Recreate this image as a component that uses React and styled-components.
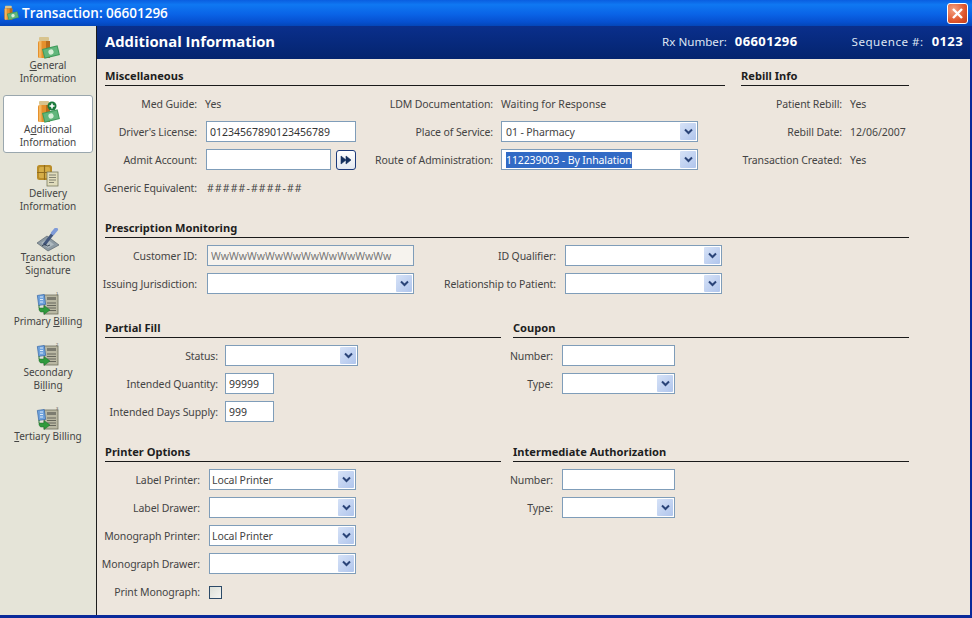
import React from 'react';
import styled, { createGlobalStyle } from 'styled-components';

const Global = createGlobalStyle`
  html, body { margin: 0; padding: 0; width: 972px; height: 618px; overflow: hidden; background: #ede6dd; }
  * { box-sizing: border-box; }
`;
const FONT = `"Noto Sans", "Liberation Sans", Arial, sans-serif`;

const Window = styled.div`
  width: 972px; height: 618px; display: flex; flex-direction: column;
  font-family: ${FONT}; font-size: 10.5px; color: #444; letter-spacing: -0.1px;
  border-bottom: 3px solid #0a2a9a; border-right: 2px solid #0a2a9a;
`;
const TitleBar = styled.div`
  height: 26px; flex: none; margin-right: -2px; display: flex; align-items: center; padding: 0 4px 0 3px;
  background: linear-gradient(180deg, #0a5ee0 0%, #0f78f2 18%, #0a63e6 55%, #0650d0 85%, #0446b8 100%);
`;
const TitleText = styled.div`
  margin-left: 3px; color: #fff; font-family: "Open Sans", ${FONT}; font-size: 13.5px; font-weight: 600; flex: 1; letter-spacing: 0;
`;
const CloseButton = styled.div`
  width: 21px; height: 21px; border: 1px solid #fff; border-radius: 3px; display: flex; align-items: center; justify-content: center;
  background: radial-gradient(circle at 30% 30%, #f4a283, #e0562c 60%, #c33c18);
`;
const Body = styled.div` flex: 1; display: flex; min-height: 0; `;
const Sidebar = styled.nav`
  width: 97px; flex: none; background: #e5e4d8; border-right: 1px solid #1c1c1c; padding: 5px 3px; display: flex; flex-direction: column; gap: 6px;
`;
const NavItem = styled.div`
  width: 90px; padding: 4px 0 3px; display: flex; flex-direction: column; align-items: center; text-align: center;
  line-height: 13px; color: #444; font-size: 10px; letter-spacing: 0;
  border: 1px solid ${p => (p.$active ? '#9aa7ae' : 'transparent')}; border-radius: 3px;
  background: ${p => (p.$active ? '#fff' : 'transparent')};
  svg { display: block; margin-bottom: -1px; }
`;
const U = styled.span` text-decoration: underline; `;
const Main = styled.main` flex: 1; display: flex; flex-direction: column; min-width: 0; background: #ede6dd; `;
const Header = styled.header`
  height: 33px; flex: none; display: flex; align-items: center; padding: 0 7px 3px 8px; color: #dfe6f3; letter-spacing: 0;
  background: linear-gradient(180deg, #0a2f8c, #04246e);
`;
const HeaderTitle = styled.h1`
  margin: 0; flex: 1; font-family: "Open Sans", ${FONT}; font-size: 14.8px; font-weight: 700; color: #fff;
`;
const HeaderLabel = styled.span` font-size: 11.6px; margin-left: ${p => p.$gap || 0}px; letter-spacing: ${p => p.$ls || 0}px; `;
const HeaderValue = styled.b` margin-left: 8px; font-size: 13px; color: #fff; font-weight: 700; letter-spacing: 0.4px; `;
const Content = styled.div` padding: 9px 0 0 8px; width: 812px; `;
const Split = styled.div`
  display: grid; grid-template-columns: ${p => p.$cols}; column-gap: ${p => p.$gap}px; margin-top: ${p => p.$top || 0}px;
`;
const Section = styled.section` margin-top: ${p => p.$top || 0}px; min-width: 0; `;
const Heading = styled.h2`
  margin: 0 0 4px; height: 18px; line-height: 16px; font-size: 11.1px; font-weight: 700; color: #1e1e1e; letter-spacing: 0;
  border-bottom: 1px solid #1a1a1a;
`;
const Columns = styled.div` display: flex; `;
const Column = styled.div` width: ${p => (p.$w ? `${p.$w}px` : 'auto')}; flex: none; `;
const Row = styled.div` height: 28px; display: flex; align-items: center; gap: ${p => p.$gap || 8}px; `;
const Label = styled.label` width: ${p => p.$w}px; flex: none; display: flex; justify-content: flex-end; white-space: nowrap; `;
const Value = styled.span` white-space: nowrap; margin-left: ${p => p.$shift || 0}px; letter-spacing: ${p => p.$ls || 0}px; `;
const TextBox = styled.input`
  width: ${p => p.$w}px; height: 21px; border: 1px solid #7f9db9; padding: 0 3px; font: inherit; outline: none; color: ${p => (p.$muted ? '#777' : '#333')};
  background: ${p => (p.$muted ? '#f6f3ee' : '#fff')}; margin: 0 0 1px; letter-spacing: 0;
`;
const Select = styled.div`
  width: ${p => p.$w}px; height: 21px; margin-bottom: 1px; border: 1px solid #7f9db9; background: #fff; display: flex; align-items: center; padding-left: ${p => p.$pad}px; padding-right: 1px;
`;
const SelectText = styled.span` flex: 1; white-space: nowrap; `;
const Highlight = styled.span` background: #316ac5; color: #fff; padding: 1px 0; `;
const ArrowButton = styled.span`
  width: 16px; height: 17px; flex: none; display: flex; align-items: center; justify-content: center; border-radius: 1px;
  background: linear-gradient(135deg, #d6e2f7, #b0c5ec);
`;
const GoButton = styled.button`
  width: 20px; height: 20px; margin: 0 0 1px -4px; padding: 0; border: 1px solid #1c3a7a; border-radius: 3px; background: linear-gradient(180deg, #fff, #e4e8f0);
  display: flex; align-items: center; justify-content: center;
`;
const Checkbox = styled.span`
  width: 13px; height: 13px; border: 1px solid #2c4a68; background: linear-gradient(135deg, #dcdfd8, #f4f4f0); display: block;
`;

const Chevron = () => (
  <svg width="9" height="7" viewBox="0 0 9 7"><path d="M1 1.5 L4.5 5 L8 1.5" fill="none" stroke="#2a4478" strokeWidth="2" /></svg>
);
const Dropdown = ({ w, value, selected, pad = 4 }) => (
  <Select $w={w} $pad={pad}>
    <SelectText>{selected ? <Highlight>{value}</Highlight> : value}</SelectText>
    <ArrowButton><Chevron /></ArrowButton>
  </Select>
);

const Bottle = ({ plus }) => (
  <>
    <rect x="3" y="1" width="10" height="4" rx="1" fill="#d8c48e" />
    <rect x="2" y="5" width="12" height="17" rx="1.5" fill="#e5902c" />
    <rect x="3" y="5" width="2.5" height="17" fill="#f4b65e" />
    <rect x="10" y="5" width="4" height="17" fill="#b86c1c" />
    <g transform="rotate(-14 15 16)">
      <rect x="7" y="11" width="16" height="10" fill="#3f9a5a" />
      <rect x="8" y="12" width="14" height="8" fill="#62b67c" />
      <circle cx="15" cy="16" r="2.6" fill="#d8efd8" />
    </g>
    {plus && (
      <g>
        <circle cx="16" cy="6" r="4.5" fill="#1a7a3c" />
        <path d="M16 3.5v5M13.5 6h5" stroke="#fff" strokeWidth="1.6" />
      </g>
    )}
  </>
);
const Delivery = () => (
  <>
    <rect x="1" y="1" width="15" height="15" rx="2.5" fill="#b98c28" />
    <rect x="3" y="3" width="11" height="11" rx="1.5" fill="#d6ae48" />
    <path d="M1 8.5h15M8.5 1v15" stroke="#8f6c1e" strokeWidth="1.2" />
    <rect x="11" y="8" width="11" height="14" fill="#e0dcbc" stroke="#7c7c60" strokeWidth="0.8" />
    <path d="M13 11h7M13 13.5h7M13 16h7M13 18.5h5" stroke="#77776a" strokeWidth="0.9" />
  </>
);
const Signature = () => (
  <>
    <path d="M1 15 L11 8 L23 17 L12 23 Z" fill="#8d9aa3" stroke="#5a6670" strokeWidth="0.7" />
    <path d="M5 15 L11 11 L18 16.5 L12 20 Z" fill="#aeb9bf" />
    <path d="M8 17 L18 4" stroke="#42567c" strokeWidth="3" />
    <path d="M17 5 L20 1.5" stroke="#7f9bd8" strokeWidth="4" strokeLinecap="round" />
    <path d="M6 18 q3 -3 4 -1 t4 0" stroke="#2c3a4c" fill="none" strokeWidth="0.9" />
  </>
);
const Billing = ({ mark }) => (
  <>
    <rect x="8" y="3" width="14" height="19" fill="#b9b7a2" stroke="#6e6e5e" strokeWidth="0.8" />
    <rect x="11" y="5" width="9" height="3" fill="#7c7c70" />
    <path d="M11 11h9M11 13.5h9M11 16h9M11 18.5h9" stroke="#67675c" strokeWidth="1" />
    <rect x="2" y="3" width="7" height="10" fill="#6fa2dc" stroke="#3a6aa8" strokeWidth="0.7" transform="rotate(-8 5 8)" />
    <path d="M4 5h3M4 7.5h3M4 10h3" stroke="#e6f0fb" strokeWidth="0.9" />
    <path d="M3 13v3h5v-2.5l6 4.5-6 4.5V20H4.5 L3 18Z" fill="#2f9a3c" stroke="#1a6a28" strokeWidth="0.5" />
    <text x="20" y="3" fontSize="4" fill="#555" fontFamily="Liberation Sans, sans-serif">{mark}</text>
  </>
);
const Icon = ({ size = 24, children }) => <svg width={size} height={size} viewBox="0 0 24 24">{children}</svg>;

const FormRow = ({ label, w, gap, children }) => (
  <Row $gap={gap}><Label $w={w}>{label}</Label>{children}</Row>
);

export default function App() {
  return (
    <>
      <Global />
      <Window>
        <TitleBar>
          <Icon size={16}><Bottle /></Icon>
          <TitleText>Transaction: 06601296</TitleText>
          <CloseButton>
            <svg width="13" height="13" viewBox="0 0 13 13"><path d="M2 2 L11 11 M11 2 L2 11" stroke="#fff" strokeWidth="2.4" /></svg>
          </CloseButton>
        </TitleBar>
        <Body>
          <Sidebar>
            <NavItem><Icon><Bottle /></Icon><span><U>G</U>eneral<br />Information</span></NavItem>
            <NavItem $active><Icon><Bottle plus /></Icon><span>A<U>d</U>ditional<br />Information</span></NavItem>
            <NavItem><Icon><Delivery /></Icon><span>Delivery<br />Information</span></NavItem>
            <NavItem><Icon><Signature /></Icon><span>T<U>r</U>ansaction<br />Signature</span></NavItem>
            <NavItem><Icon><Billing mark="1" /></Icon><span>Primary <U>B</U>illing</span></NavItem>
            <NavItem><Icon><Billing mark="2" /></Icon><span>Secondary<br />Bi<U>l</U>ling</span></NavItem>
            <NavItem><Icon><Billing mark="3" /></Icon><span><U>T</U>ertiary Billing</span></NavItem>
          </Sidebar>
          <Main>
            <Header>
              <HeaderTitle>Additional Information</HeaderTitle>
              <HeaderLabel>Rx Number:</HeaderLabel><HeaderValue>06601296</HeaderValue>
              <HeaderLabel $gap={54} $ls={0.5}>Sequence #:</HeaderLabel><HeaderValue>0123</HeaderValue>
            </Header>
            <Content>
              <Split $cols="620px 168px" $gap={16}>
                <Section>
                  <Heading>Miscellaneous</Heading>
                  <Columns>
                    <Column $w={270}>
                      <FormRow label="Med Guide:" w={92}><Value>Yes</Value></FormRow>
                      <FormRow label="Driver's License:" w={92} gap={9}><TextBox $w={150} readOnly defaultValue="01234567890123456789" /></FormRow>
                      <FormRow label="Admit Account:" w={92} gap={9}><TextBox $w={125} readOnly /><GoButton aria-label="Go">
                        <svg width="12" height="10" viewBox="0 0 12 10"><path d="M1 1l5 4-5 4zM6 1l5 4-5 4z" fill="#14305e" stroke="#14305e" strokeWidth="0.6" /></svg>
                      </GoButton></FormRow>
                      <FormRow label="Generic Equivalent:" w={92}><Value $shift={2} $ls={1.1}>#####-####-##</Value></FormRow>
                    </Column>
                    <Column>
                      <FormRow label="LDM Documentation:" w={118}><Value>Waiting for Response</Value></FormRow>
                      <FormRow label="Place of Service:" w={118}><Dropdown w={197} value="01 - Pharmacy" /></FormRow>
                      <FormRow label="Route of Administration:" w={118}><Dropdown w={197} value="112239003 - By Inhalation" selected /></FormRow>
                    </Column>
                  </Columns>
                </Section>
                <Section>
                  <Heading>Rebill Info</Heading>
                  <FormRow label="Patient Rebill:" w={101}><Value>Yes</Value></FormRow>
                  <FormRow label="Rebill Date:" w={101}><Value>12/06/2007</Value></FormRow>
                  <FormRow label="Transaction Created:" w={101}><Value>Yes</Value></FormRow>
                </Section>
              </Split>

              <Section $top={18}>
                <Heading>Prescription Monitoring</Heading>
                <Columns>
                  <Column $w={339}>
                    <FormRow label="Customer ID:" w={92} gap={10}><TextBox $w={207} $muted readOnly defaultValue="WwWwWwWwWwWwWwWwWwWw" /></FormRow>
                    <FormRow label="Issuing Jurisdiction:" w={92} gap={10}><Dropdown w={207} /></FormRow>
                  </Column>
                  <Column>
                    <FormRow label="ID Qualifier:" w={112} gap={9}><Dropdown w={157} /></FormRow>
                    <FormRow label="Relationship to Patient:" w={112} gap={9}><Dropdown w={157} /></FormRow>
                  </Column>
                </Columns>
              </Section>

              <Split $cols="396px 396px" $gap={12} $top={22}>
                <Section>
                  <Heading>Partial Fill</Heading>
                  <FormRow label="Status:" w={113} gap={7}><Dropdown w={133} /></FormRow>
                  <FormRow label="Intended Quantity:" w={113} gap={7}><TextBox $w={49} readOnly defaultValue="99999" /></FormRow>
                  <FormRow label="Intended Days Supply:" w={113} gap={7}><TextBox $w={49} readOnly defaultValue="999" /></FormRow>
                </Section>
                <Section>
                  <Heading>Coupon</Heading>
                  <FormRow label="Number:" w={40} gap={9}><TextBox $w={113} readOnly /></FormRow>
                  <FormRow label="Type:" w={40} gap={9}><Dropdown w={113} /></FormRow>
                </Section>
              </Split>

              <Split $cols="396px 396px" $gap={12} $top={18}>
                <Section>
                  <Heading>Printer Options</Heading>
                  <FormRow label="Label Printer:" w={95} gap={9}><Dropdown w={147} pad={2} value="Local Printer" /></FormRow>
                  <FormRow label="Label Drawer:" w={95} gap={9}><Dropdown w={147} /></FormRow>
                  <FormRow label="Monograph Printer:" w={95} gap={9}><Dropdown w={147} pad={2} value="Local Printer" /></FormRow>
                  <FormRow label="Monograph Drawer:" w={95} gap={9}><Dropdown w={147} /></FormRow>
                  <FormRow label="Print Monograph:" w={95} gap={9}><Checkbox /></FormRow>
                </Section>
                <Section>
                  <Heading>Intermediate Authorization</Heading>
                  <FormRow label="Number:" w={40} gap={9}><TextBox $w={113} readOnly /></FormRow>
                  <FormRow label="Type:" w={40} gap={9}><Dropdown w={113} /></FormRow>
                </Section>
              </Split>
            </Content>
          </Main>
        </Body>
      </Window>
    </>
  );
}
